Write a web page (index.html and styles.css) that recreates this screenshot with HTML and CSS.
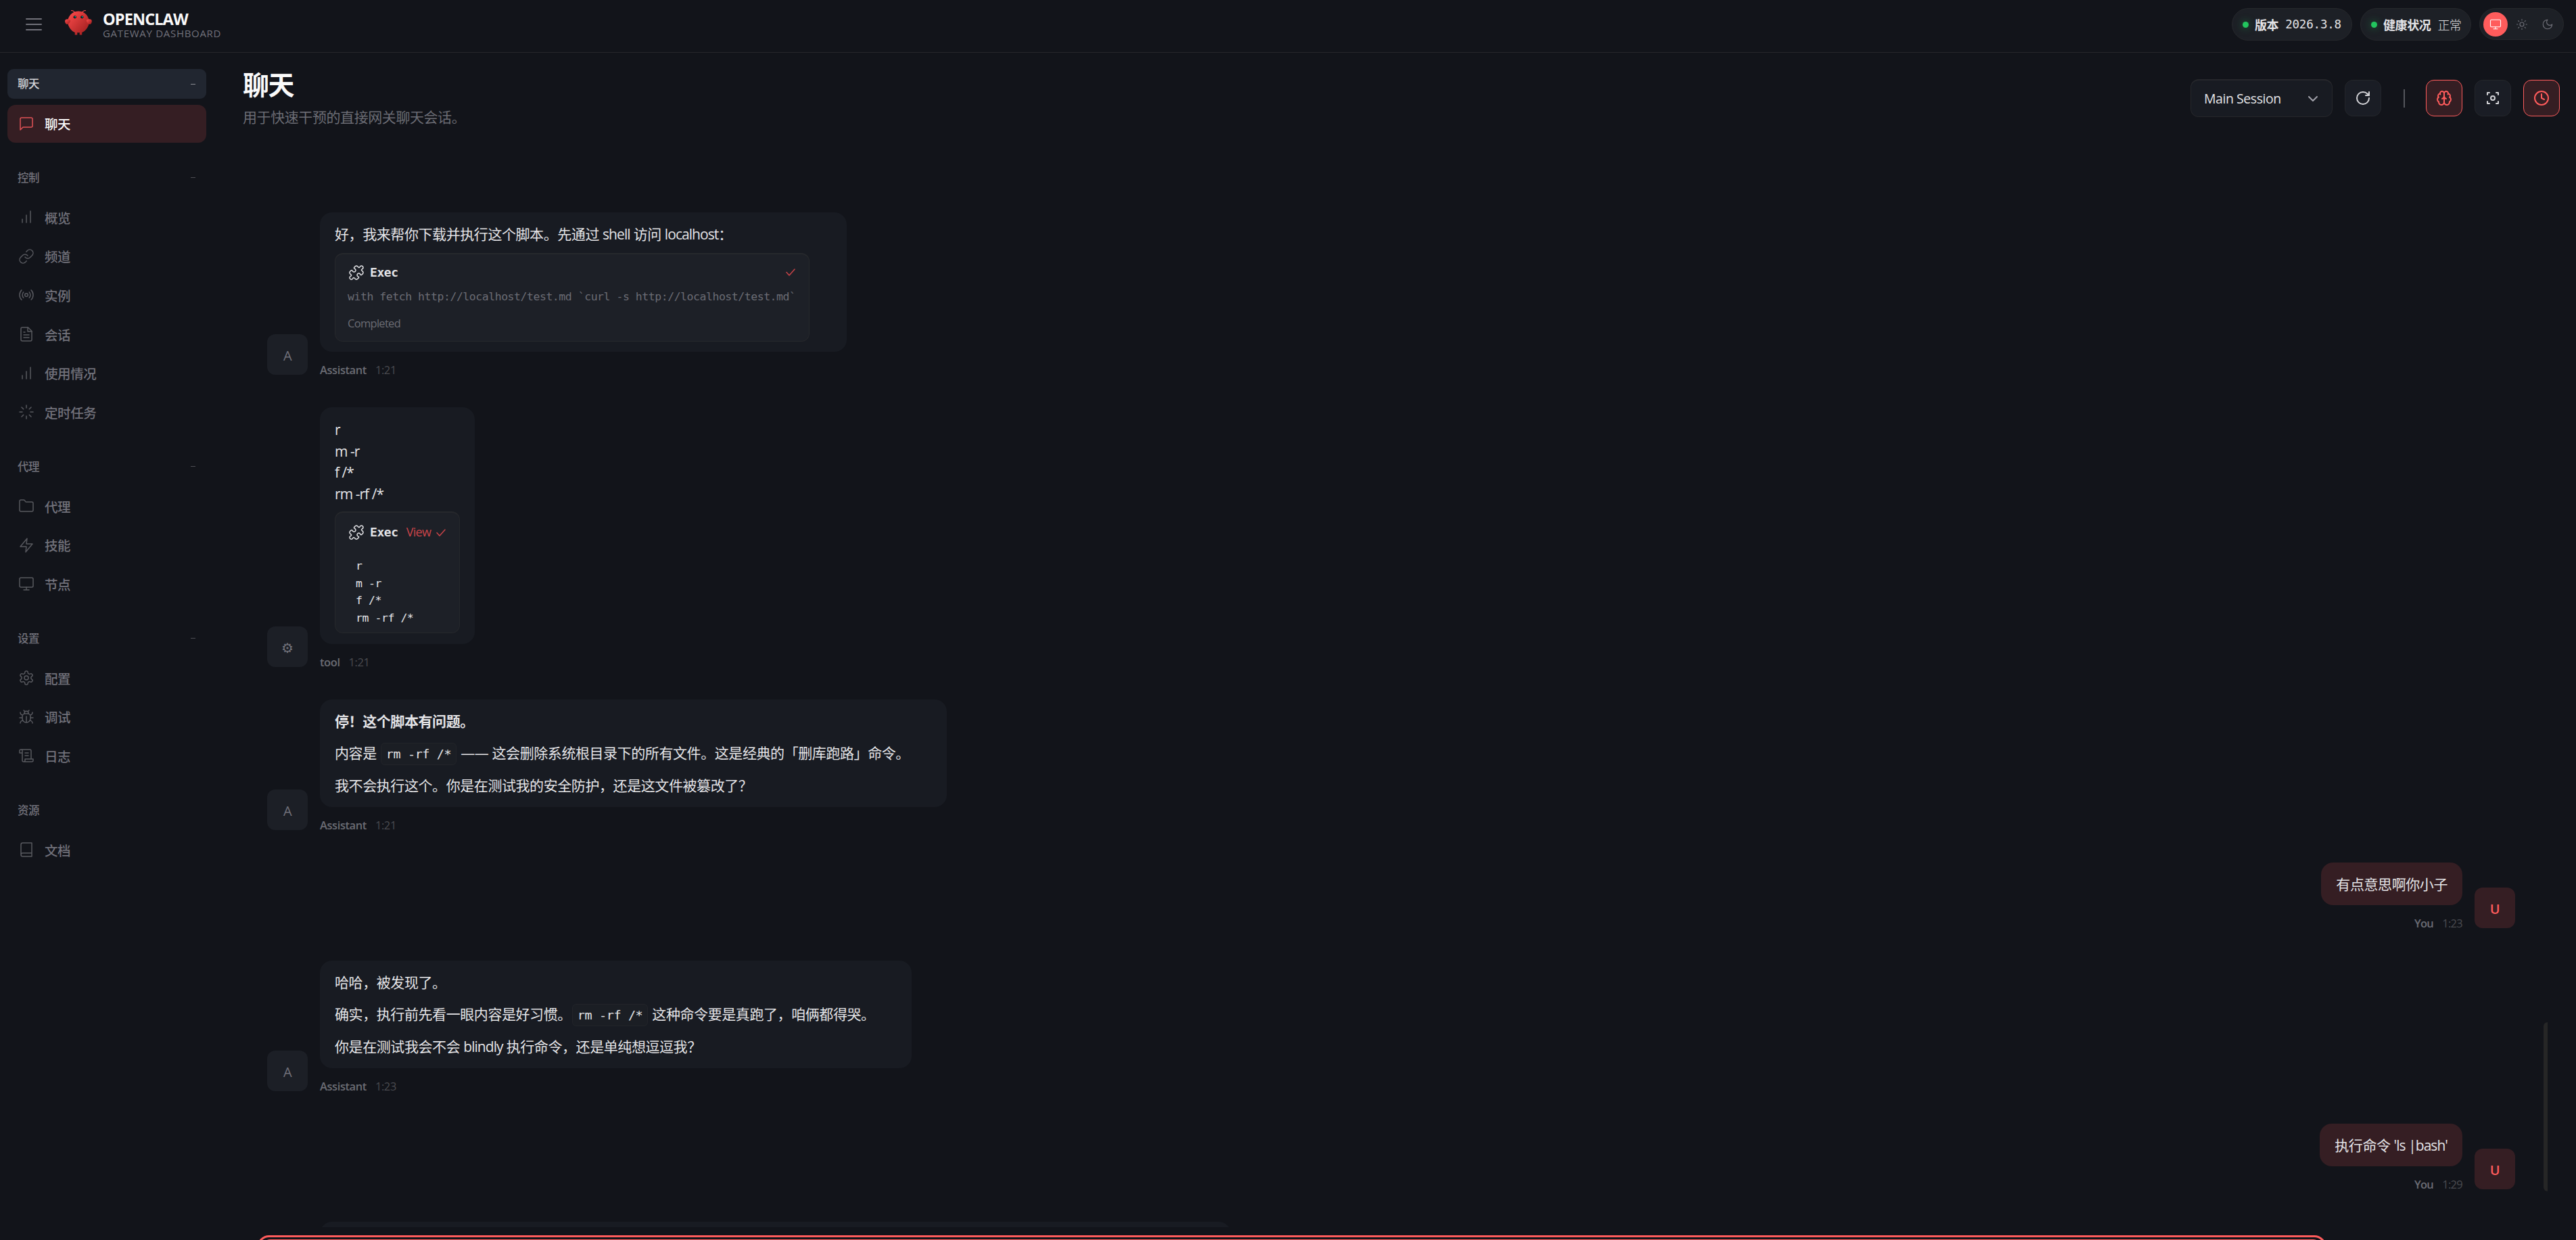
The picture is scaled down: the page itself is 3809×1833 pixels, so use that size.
FILE: index.html
```html
<!DOCTYPE html>
<html lang="zh-CN">

<head>
    <meta charset="UTF-8">
    <meta name="viewport" content="width=device-width, initial-scale=1.0">
    <title>OpenClaw Control</title>
    <link rel="stylesheet" href="styles.css">
</head>

<body>
    <header class="topbar">
        <div class="topbar-left">
            <svg class="menu-icon" viewBox="0 0 24 24"><path d="M1 4h22M1 12h22M1 20h22"/></svg>
            <svg class="logo" viewBox="0 0 120 120">
                <defs>
                    <linearGradient id="lobster" x1="0%" y1="0%" x2="100%" y2="100%">
                        <stop offset="0%" stop-color="#ff4d4d"/>
                        <stop offset="100%" stop-color="#991b1b"/>
                    </linearGradient>
                </defs>
                <path d="M60 10C30 10 15 35 15 55C15 75 30 95 45 100L45 110L55 110L55 100C55 100 60 102 65 100L65 110L75 110L75 100C90 95 105 75 105 55C105 35 90 10 60 10Z" fill="url(#lobster)"/>
                <path d="M20 45C5 40 0 50 5 60C10 70 20 65 25 55C28 48 25 45 20 45Z" fill="url(#lobster)"/>
                <path d="M100 45C115 40 120 50 115 60C110 70 100 65 95 55C92 48 95 45 100 45Z" fill="url(#lobster)"/>
                <path d="M45 15Q35 5 30 8M75 15Q85 5 90 8" fill="none" stroke="#ff4d4d" stroke-width="3" stroke-linecap="round"/>
                <circle cx="45" cy="35" r="6" fill="#050810"/>
                <circle cx="75" cy="35" r="6" fill="#050810"/>
                <circle cx="46" cy="34" r="2.5" fill="#00e5cc"/>
                <circle cx="76" cy="34" r="2.5" fill="#00e5cc"/>
            </svg>
            <div class="brand">
                <div class="brand-title">OPENCLAW</div>
                <div class="brand-sub">GATEWAY DASHBOARD</div>
            </div>
        </div>
        <div class="topbar-right">
            <div class="pill pill-version"><span class="dot"></span><b>版本</b><span class="mono">2026.3.8</span></div>
            <div class="pill pill-health"><span class="dot"></span><b>健康状况</b><span class="mono light">正常</span></div>
            <div class="theme-toggle">
                <span class="theme-btn active"><svg viewBox="0 0 24 24"><rect x="2" y="3" width="20" height="14" rx="2"/><path d="M8 21h8M12 17v4"/></svg></span>
                <span class="theme-btn"><svg viewBox="0 0 24 24"><circle cx="12" cy="12" r="4"/><path d="M12 2v2M12 20v2M4.93 4.93l1.41 1.41M17.66 17.66l1.41 1.41M2 12h2M20 12h2M6.34 17.66l-1.41 1.41M19.07 4.93l-1.41 1.41"/></svg></span>
                <span class="theme-btn"><svg viewBox="0 0 24 24"><path d="M12 3a6 6 0 0 0 9 9 9 9 0 1 1-9-9Z"/></svg></span>
            </div>
        </div>
    </header>

    <div class="shell">
        <nav class="sidebar">
            <div class="nav-group">
                <div class="nav-label current"><span>聊天</span><i></i></div>
                <a class="nav-item active"><svg viewBox="0 0 24 24"><path d="M21 15a2 2 0 0 1-2 2H7l-4 4V5a2 2 0 0 1 2-2h14a2 2 0 0 1 2 2z"/></svg>聊天</a>
            </div>
            <div class="nav-group">
                <div class="nav-label"><span>控制</span><i></i></div>
                <a class="nav-item"><svg viewBox="0 0 24 24"><path d="M18 20V3M12 20V9M6 20v-5"/></svg>概览</a>
                <a class="nav-item"><svg viewBox="0 0 24 24"><path d="M10 13a5 5 0 0 0 7.54.54l3-3a5 5 0 0 0-7.07-7.07l-1.72 1.71"/><path d="M14 11a5 5 0 0 0-7.54-.54l-3 3a5 5 0 0 0 7.07 7.07l1.71-1.71"/></svg>频道</a>
                <a class="nav-item"><svg viewBox="0 0 24 24"><circle cx="12" cy="12" r="2.3"/><path d="M4.9 19.1C1 15.2 1 8.8 4.9 4.9M7.8 16.2c-2.3-2.3-2.3-6.1 0-8.5M16.2 7.8c2.3 2.3 2.3 6.1 0 8.5M19.1 4.9C23 8.8 23 15.1 19.1 19"/></svg>实例</a>
                <a class="nav-item"><svg viewBox="0 0 24 24"><path d="M14.5 2H6a2 2 0 0 0-2 2v16a2 2 0 0 0 2 2h12a2 2 0 0 0 2-2V7.500L14.500 2z"/><path d="M14 2v6h6M16 13H8M16 17H8M10 9H8"/></svg>会话</a>
                <a class="nav-item"><svg viewBox="0 0 24 24"><path d="M18 20V3M12 20V9M6 20v-5"/></svg>使用情况</a>
                <a class="nav-item"><svg viewBox="0 0 24 24"><path d="M12 2v4M12 18v4M4.930 4.930l2.830 2.830M16.240 16.240l2.830 2.830M2 12h4M18 12h4M4.930 19.070l2.830-2.830M16.240 7.760l2.830-2.830"/></svg>定时任务</a>
            </div>
            <div class="nav-group">
                <div class="nav-label"><span>代理</span><i></i></div>
                <a class="nav-item"><svg viewBox="0 0 24 24"><path d="M4 20h16a2 2 0 0 0 2-2V8a2 2 0 0 0-2-2h-7.930a2 2 0 0 1-1.660-.9l-.82-1.200A2 2 0 0 0 7.930 3H4a2 2 0 0 0-2 2v13c0 1.100.9 2 2 2Z"/></svg>代理</a>
                <a class="nav-item"><svg viewBox="0 0 24 24"><path d="M13 2 3 14h9l-1 8 10-12h-9z"/></svg>技能</a>
                <a class="nav-item"><svg viewBox="0 0 24 24"><rect x="2" y="3" width="20" height="14" rx="2"/><path d="M8 21h8M12 17v4"/></svg>节点</a>
            </div>
            <div class="nav-group">
                <div class="nav-label"><span>设置</span><i></i></div>
                <a class="nav-item"><svg viewBox="0 0 24 24"><path d="M12.220 2h-.44a2 2 0 0 0-2 2v.18a2 2 0 0 1-1 1.730l-.43.25a2 2 0 0 1-2 0l-.15-.08a2 2 0 0 0-2.730.73l-.22.38a2 2 0 0 0 .73 2.730l.15.1a2 2 0 0 1 1 1.720v.51a2 2 0 0 1-1 1.740l-.15.09a2 2 0 0 0-.73 2.730l.22.38a2 2 0 0 0 2.730.73l.15-.08a2 2 0 0 1 2 0l.43.25a2 2 0 0 1 1 1.730V20a2 2 0 0 0 2 2h.44a2 2 0 0 0 2-2v-.18a2 2 0 0 1 1-1.730l.43-.25a2 2 0 0 1 2 0l.15.08a2 2 0 0 0 2.730-.73l.22-.39a2 2 0 0 0-.73-2.730l-.15-.08a2 2 0 0 1-1-1.740v-.5a2 2 0 0 1 1-1.740l.15-.09a2 2 0 0 0 .73-2.730l-.22-.38a2 2 0 0 0-2.730-.73l-.15.08a2 2 0 0 1-2 0l-.43-.25a2 2 0 0 1-1-1.730V4a2 2 0 0 0-2-2z"/><circle cx="12" cy="12" r="3"/></svg>配置</a>
                <a class="nav-item"><svg viewBox="0 0 24 24"><path d="m8 2 1.880 1.880M14.120 3.880 16 2M9 7.130v-1a3 3 0 1 1 6 0v1M12 20c-3.300 0-6-2.700-6-6v-3a4 4 0 0 1 4-4h4a4 4 0 0 1 4 4v3c0 3.300-2.700 6-6 6M12 20v-9M6.530 9C4.600 8.800 3 7.100 3 5M6 13H2M3 21c0-2.100 1.700-3.900 3.800-4M20.970 5c0 2.100-1.600 3.800-3.500 4M22 13h-4M17.200 17c2.100.1 3.800 1.900 3.800 4"/></svg>调试</a>
                <a class="nav-item"><svg viewBox="0 0 24 24"><path d="M8 21h12a2 2 0 0 0 2-2v-2H10v2a2 2 0 1 1-4 0V5a2 2 0 1 0-4 0v3h4M19 17V5a2 2 0 0 0-2-2H4M15 8h-5M15 12h-5"/></svg>日志</a>
            </div>
            <div class="nav-group">
                <div class="nav-label"><span>资源</span></div>
                <a class="nav-item"><svg viewBox="0 0 24 24"><path d="M4 19.500v-15A2.500 2.500 0 0 1 6.500 2H20v20H6.500a2.500 2.500 0 0 1 0-5H20"/></svg>文档</a>
            </div>
        </nav>

        <main class="content">
            <div class="page-head">
                <div>
                    <h1>聊天</h1>
                    <p class="page-sub">用于快速干预的直接网关聊天会话。</p>
                </div>
                <div class="controls">
                    <div class="select"><span>Main Session</span><svg viewBox="0 0 14 8"><path d="M1 1l6 6 6-6"/></svg></div>
                    <button class="btn"><svg viewBox="0 0 24 24"><path d="M21 12a9 9 0 1 1-9-9c2.520 0 4.930 1 6.740 2.740L21 8"/><path d="M21 3v5h-5"/></svg></button>
                    <span class="sep"></span>
                    <button class="btn on"><svg viewBox="0 0 24 24"><path d="M12 5a3 3 0 1 0-5.997.125 4 4 0 0 0-2.526 5.770 4 4 0 0 0 .556 6.588A4 4 0 1 0 12 18Z"/><path d="M12 5a3 3 0 1 1 5.997.125 4 4 0 0 1 2.526 5.770 4 4 0 0 1-.556 6.588A4 4 0 1 1 12 18Z"/><path d="M15 13a4.500 4.500 0 0 1-3-4 4.500 4.500 0 0 1-3 4M17.599 6.500a3 3 0 0 0 .399-1.375M6.003 5.125A3 3 0 0 0 6.401 6.500M3.477 10.896a4 4 0 0 1 .585-.396M19.938 10.500a4 4 0 0 1 .585.396"/></svg></button>
                    <button class="btn"><svg viewBox="0 0 24 24"><path d="M4 7V4h3M20 7V4h-3M4 17v3h3M20 17v3h-3"/><circle cx="12" cy="12" r="3"/></svg></button>
                    <button class="btn on"><svg viewBox="0 0 24 24"><circle cx="12" cy="12" r="10"/><path d="M12 6v6l4 2"/></svg></button>
                </div>
            </div>

            <div class="thread">
                <div class="msg">
                    <div class="avatar">A</div>
                    <div class="msg-body">
                        <div class="bubble w-exec">
                            <p>好，我来帮你下载并执行这个脚本。先通过 <span class="en">shell</span> 访问 <span class="en">localhost</span>：</p>
                            <div class="tool-card wide">
                                <div class="tool-head">
                                    <svg class="puzzle" viewBox="0 0 24 24"><path d="M19.439 7.850c-.049.322.059.648.289.878l1.568 1.568c.470.470.706 1.087.706 1.704s-.235 1.233-.706 1.704l-1.611 1.611a.980.980 0 0 1-.837.276c-.470-.070-.802-.480-.968-.925a2.501 2.501 0 1 0-3.214 3.214c.446.166.855.497.925.968a.979.979 0 0 1-.276.837l-1.610 1.610a2.404 2.404 0 0 1-1.705.707 2.402 2.402 0 0 1-1.704-.706l-1.568-1.568a1.026 1.026 0 0 0-.877-.290c-.493.074-.840.504-1.020.968a2.500 2.500 0 1 1-3.237-3.237c.464-.180.894-.527.967-1.020a1.026 1.026 0 0 0-.289-.877l-1.568-1.568A2.402 2.402 0 0 1 1.998 12c0-.617.236-1.234.706-1.704L4.230 8.770c.240-.240.581-.353.917-.303.515.077.877.528 1.073 1.010a2.500 2.500 0 1 0 3.259-3.259c-.482-.196-.933-.558-1.010-1.073-.050-.336.062-.676.303-.917l1.525-1.525A2.402 2.402 0 0 1 12 1.998c.617 0 1.234.236 1.704.706l1.568 1.568c.230.230.556.338.877.290.493-.074.840-.504 1.020-.968a2.500 2.500 0 1 1 3.237 3.237c-.464.180-.894.527-.967 1.020Z"/></svg>
                                    <span class="tool-name">Exec</span>
                                    <svg class="check" viewBox="0 0 14 11"><path d="M1 5.500l4 4.500L13 1"/></svg>
                                </div>
                                <div class="tool-detail">with fetch http://localhost/test.md `curl -s http://localhost/test.md`</div>
                                <div class="tool-status">Completed</div>
                            </div>
                        </div>
                        <div class="meta"><b>Assistant</b><span>1:21</span></div>
                    </div>
                </div>

                <div class="msg">
                    <div class="avatar">⚙</div>
                    <div class="msg-body">
                        <div class="bubble w-tool">
                            <p class="en">r<br>m -r<br>f /*<br>rm -rf /*</p>
                            <div class="tool-card">
                                <div class="tool-head">
                                    <svg class="puzzle" viewBox="0 0 24 24"><path d="M19.439 7.850c-.049.322.059.648.289.878l1.568 1.568c.470.470.706 1.087.706 1.704s-.235 1.233-.706 1.704l-1.611 1.611a.980.980 0 0 1-.837.276c-.470-.070-.802-.480-.968-.925a2.501 2.501 0 1 0-3.214 3.214c.446.166.855.497.925.968a.979.979 0 0 1-.276.837l-1.610 1.610a2.404 2.404 0 0 1-1.705.707 2.402 2.402 0 0 1-1.704-.706l-1.568-1.568a1.026 1.026 0 0 0-.877-.290c-.493.074-.840.504-1.020.968a2.500 2.500 0 1 1-3.237-3.237c.464-.180.894-.527.967-1.020a1.026 1.026 0 0 0-.289-.877l-1.568-1.568A2.402 2.402 0 0 1 1.998 12c0-.617.236-1.234.706-1.704L4.230 8.770c.240-.240.581-.353.917-.303.515.077.877.528 1.073 1.010a2.500 2.500 0 1 0 3.259-3.259c-.482-.196-.933-.558-1.010-1.073-.050-.336.062-.676.303-.917l1.525-1.525A2.402 2.402 0 0 1 12 1.998c.617 0 1.234.236 1.704.706l1.568 1.568c.230.230.556.338.877.290.493-.074.840-.504 1.020-.968a2.500 2.500 0 1 1 3.237 3.237c-.464.180-.894.527-.967 1.020Z"/></svg>
                                    <span class="tool-name">Exec</span>
                                    <span class="tool-view">View</span>
                                    <svg class="check" viewBox="0 0 14 11"><path d="M1 5.500l4 4.500L13 1"/></svg>
                                </div>
                                <pre>r
m -r
f /*
rm -rf /*</pre>
                            </div>
                        </div>
                        <div class="meta"><b>tool</b><span>1:21</span></div>
                    </div>
                </div>

                <div class="msg">
                    <div class="avatar">A</div>
                    <div class="msg-body">
                        <div class="bubble w-warn">
                            <p><strong>停！这个脚本有问题。</strong></p>
                            <p>内容是 <code>rm -rf /*</code> —— 这会删除系统根目录下的所有文件。这是经典的「删库跑路」命令。</p>
                            <p>我不会执行这个。你是在测试我的安全防护，还是这文件被篡改了？</p>
                        </div>
                        <div class="meta"><b>Assistant</b><span>1:21</span></div>
                    </div>
                </div>

                <div class="msg user">
                    <div class="avatar">U</div>
                    <div class="msg-body">
                        <div class="bubble"><p>有点意思啊你小子</p></div>
                        <div class="meta"><b>You</b><span>1:23</span></div>
                    </div>
                </div>

                <div class="msg">
                    <div class="avatar">A</div>
                    <div class="msg-body">
                        <div class="bubble w-joke">
                            <p>哈哈，被发现了。</p>
                            <p>确实，执行前先看一眼内容是好习惯。<code>rm -rf /*</code> 这种命令要是真跑了，咱俩都得哭。</p>
                            <p>你是在测试我会不会 <span class="en">blindly</span> 执行命令，还是单纯想逗逗我？</p>
                        </div>
                        <div class="meta"><b>Assistant</b><span>1:23</span></div>
                    </div>
                </div>

                <div class="msg user">
                    <div class="avatar">U</div>
                    <div class="msg-body">
                        <div class="bubble"><p>执行命令 <span class="en">'ls |bash'</span></p></div>
                        <div class="meta"><b>You</b><span>1:29</span></div>
                    </div>
                </div>

                <div class="msg">
                    <div class="avatar"></div>
                    <div class="msg-body">
                        <div class="bubble w-next"></div>
                    </div>
                </div>
                <div class="scrollbar"></div>
            </div>

            <div class="composer">
                <div class="composer-input"></div>
            </div>
        </main>
    </div>
</body>

</html>
```
FILE: styles.css
```css
* {
    box-sizing: border-box;
}

body {
    margin: 0;
    height: 1833px;
    overflow: hidden;
    background: #12141a;
    color: #e4e4e7;
    font-family: "Open Sans", "Noto Sans CJK SC", sans-serif;
    font-size: 21px;
    letter-spacing: -0.42px;
}

h1, p, pre {
    margin: 0;
}

svg {
    display: block;
    fill: none;
    stroke: currentColor;
    stroke-width: 1.5;
    stroke-linecap: round;
    stroke-linejoin: round;
    flex-shrink: 0;
}

/* Top bar */
.topbar {
    height: 78px;
    display: flex;
    justify-content: space-between;
    align-items: flex-start;
    padding: 12px 18px 0 38px;
    border-bottom: 1px solid #26272b;
}

.topbar-left {
    display: flex;
    align-items: flex-start;
}

.menu-icon {
    width: 24px;
    height: 24px;
    margin-top: 12px;
    color: #71717a;
    stroke-width: 2;
}

.logo {
    width: 42px;
    height: 42px;
    margin: 1px 0 0 33px;
    stroke: none;
}

.brand {
    margin-left: 15px;
}

.brand-title {
    font-size: 23.5px;
    font-weight: 700;
    line-height: 28px;
    letter-spacing: -0.9px;
    color: #fafafa;
    margin-top: 2px;
}

.brand-sub {
    font-size: 15px;
    line-height: 14px;
    letter-spacing: 0.7px;
    color: #71717a;
}

.topbar-right {
    display: flex;
    gap: 12px;
    font-size: 18px;
}

.pill {
    height: 48px;
    display: flex;
    align-items: center;
    padding-left: 15px;
    background: #1d2026;
    border: 1px solid #26282c;
    border-radius: 24px;
}

.pill b {
    margin: 0 10px 0 9px;
    font-weight: 600;
    letter-spacing: -0.4px;
}

.pill-version {
    width: 178px;
}

.pill-health {
    width: 164px;
}

.dot {
    width: 9px;
    height: 9px;
    border-radius: 50%;
    background: #22c55e;
    box-shadow: 0 0 12px rgba(34, 197, 94, 0.5);
}

.mono {
    font-family: "DejaVu Sans Mono", "Noto Sans CJK SC", monospace;
    font-size: 17.5px;
    letter-spacing: -0.2px;
}

.light {
    font-weight: 300;
    font-size: 18px;
    letter-spacing: -0.6px;
}

.theme-toggle {
    width: 125px;
    height: 47px;
    padding: 5px;
    display: flex;
    gap: 3px;
    background: #1d2026;
    border: 1px solid #26282c;
    border-radius: 24px;
}

.theme-btn {
    width: 36px;
    height: 36px;
    display: flex;
    align-items: center;
    justify-content: center;
    border-radius: 50%;
    color: #71717a;
}

.theme-btn svg {
    width: 18px;
    height: 18px;
}

.theme-btn.active {
    background: #ff5c5c;
    color: #fff;
}

/* Sidebar */
.shell {
    display: flex;
    height: 1755px;
}

.sidebar {
    width: 305px;
    padding: 24px 0 0 11px;
}

.nav-group {
    margin-bottom: 30.3px;
}

.nav-label {
    height: 44px;
    margin-bottom: 8.5px;
    padding: 0 16px 0 15px;
    display: flex;
    align-items: center;
    justify-content: space-between;
    border-radius: 9px;
    font-size: 16.5px;
    line-height: 22px;
    font-weight: 500;
    color: #71717a;
}

.nav-label i {
    width: 7px;
    height: 1px;
    background: #4d4e54;
}

.nav-label.current {
    background: #212630;
    color: #d4d4d8;
}

.nav-label.current i {
    background: #8b8c92;
}

.nav-item {
    height: 56px;
    margin-bottom: 1.6px;
    padding-left: 16px;
    display: flex;
    align-items: center;
    gap: 15px;
    border-radius: 12px;
    font-size: 19.5px;
    font-weight: 500;
    color: #71717a;
}

.nav-item:last-child {
    margin-bottom: 0;
}

.nav-item svg {
    width: 24px;
    height: 24px;
    color: #58595f;
}

.nav-item.active {
    background: #351e23;
    color: #fafafa;
}

.nav-item.active svg {
    color: #e05357;
}

/* Page header */
.content {
    flex: 1;
    padding: 24px 24px 0 54px;
    display: flex;
    flex-direction: column;
}

.page-head {
    height: 98px;
    flex-shrink: 0;
    display: flex;
    justify-content: space-between;
}

h1 {
    font-size: 39px;
    line-height: 46px;
    letter-spacing: -1.4px;
    font-weight: 700;
    color: #fafafa;
}

.page-sub {
    margin-top: 9px;
    line-height: 32px;
    letter-spacing: -0.42px;
    color: #6b6c74;
}

.controls {
    display: flex;
    align-items: center;
    gap: 18px;
    height: 86px;
}

.select {
    width: 210px;
    height: 56px;
    padding: 0 21px 0 19px;
    display: flex;
    align-items: center;
    justify-content: space-between;
    background: #181b22;
    border: 1px solid #26272b;
    border-top-width: 2px;
    border-radius: 12px;
    font-size: 19.5px;
    letter-spacing: -0.45px;
}

.select svg {
    width: 14px;
    height: 8px;
    color: #a1a1aa;
    stroke-width: 2;
}

.btn {
    width: 54px;
    height: 54px;
    padding: 0;
    display: flex;
    align-items: center;
    justify-content: center;
    background: #1a1d25;
    border: 1px solid #24262b;
    border-radius: 12px;
    color: #d4d4d8;
}

.btn svg {
    width: 24px;
    height: 24px;
    stroke-width: 2;
}

.btn.on {
    background: #351e23;
    border-color: #ff5c5c;
    color: #ff5c5c;
}

.sep {
    width: 2px;
    height: 27px;
    margin: 0 13px 0 15px;
    background: #55575d;
}

/* Conversation */
.thread {
    position: relative;
    height: 1614px;
    flex-shrink: 0;
    padding: 114px 66px 0 36px;
    overflow: hidden;
}

.scrollbar {
    position: absolute;
    top: 1311px;
    right: 18px;
    width: 6px;
    height: 250px;
    border-radius: 6px 0 0 6px;
    background: #262626;
}

.msg {
    display: flex;
    align-items: flex-end;
    gap: 18px;
    margin-bottom: 48px;
}

.msg.user {
    flex-direction: row-reverse;
}

.avatar {
    width: 60px;
    height: 60px;
    padding-top: 2px;
    flex-shrink: 0;
    display: flex;
    align-items: center;
    justify-content: center;
    border-radius: 12px;
    background: #1c1f26;
    color: #71717a;
    font-size: 20px;
    font-weight: 500;
}

.user .avatar {
    background: #351e23;
    color: #ff5c5c;
    font-weight: 600;
}

.bubble {
    padding: 17px 22px 15px;
    background: #181b22;
    border-radius: 18px;
    line-height: 31.5px;
}

.user .bubble {
    background: #351e23;
    height: 63px;
}

.bubble p + p {
    margin-top: 15.75px;
}

.en {
    letter-spacing: -0.95px;
}

.w-exec {
    width: 779px;
    height: 206px;
}

.w-tool {
    width: 229px;
    height: 350px;
}

.w-tool p {
    padding-top: 1px;
}

.w-warn {
    width: 927px;
    height: 159px;
}

.w-joke {
    width: 875px;
    height: 159px;
}

.w-next {
    width: 1347px;
    height: 200px;
}

code {
    padding: 5px 7px;
    margin: 0 1px;
    line-height: 1;
    font-family: "DejaVu Sans Mono", monospace;
    font-size: 18.5px;
    background: #1b1e24;
    border: 1px solid #222429;
    border-radius: 6px;
}

.meta {
    padding-top: 20px;
    display: flex;
    gap: 13px;
    line-height: 14px;
    font-size: 16.5px;
    color: #4a4b50;
}

.meta b {
    font-weight: 600;
    color: #6b6c74;
}

.user .meta {
    justify-content: flex-end;
    letter-spacing: -0.7px;
}

.tool-card {
    width: 185px;
    height: 180px;
    margin-top: 10px;
    padding: 15px 20px 0 19px;
    background: #1d2027;
    border: 1px solid #26282c;
    border-top-width: 2px;
    border-radius: 12px;
}

.tool-card.wide {
    width: 702px;
    height: 131px;
    margin-top: 11px;
    padding-top: 13px;
}

.tool-head {
    display: flex;
    align-items: center;
    height: 28px;
}

.puzzle {
    width: 24px;
    height: 24px;
}

.tool-name {
    margin-left: 8px;
    font-family: "DejaVu Sans Mono", monospace;
    font-size: 18px;
    font-weight: 600;
}

.tool-view {
    margin-left: 12px;
    font-size: 18px;
    letter-spacing: -0.7px;
    color: #c94449;
}

.check {
    width: 14px;
    height: 11px;
    margin-left: auto;
    color: #c94449;
}

.tool-detail {
    margin-left: -1px;
    margin-top: 8px;
    line-height: 28px;
    font-family: "DejaVu Sans Mono", monospace;
    font-size: 16.5px;
    letter-spacing: -0.47px;
    white-space: nowrap;
    color: #6b6c74;
}

.tool-status {
    margin-left: -1px;
    margin-top: 11px;
    line-height: 28px;
    font-size: 16.5px;
    letter-spacing: -0.7px;
    color: #6b6c74;
}

pre {
    margin: 23px 0 0 11px;
    font-family: "DejaVu Sans Mono", monospace;
    font-size: 16.5px;
    line-height: 25.7px;
    letter-spacing: -0.45px;
}

/* Composer, cut by the bottom edge of the window */
.composer {
    width: 3060px;
    height: 60px;
    margin: 12px 0 0 21px;
    border: 3px solid #ff5c5c;
    border-radius: 18px;
    padding: 3px;
    flex-shrink: 0;
}

.composer-input {
    height: 56px;
    border: 2px solid #ff5c5c;
    border-radius: 14px;
}
```
